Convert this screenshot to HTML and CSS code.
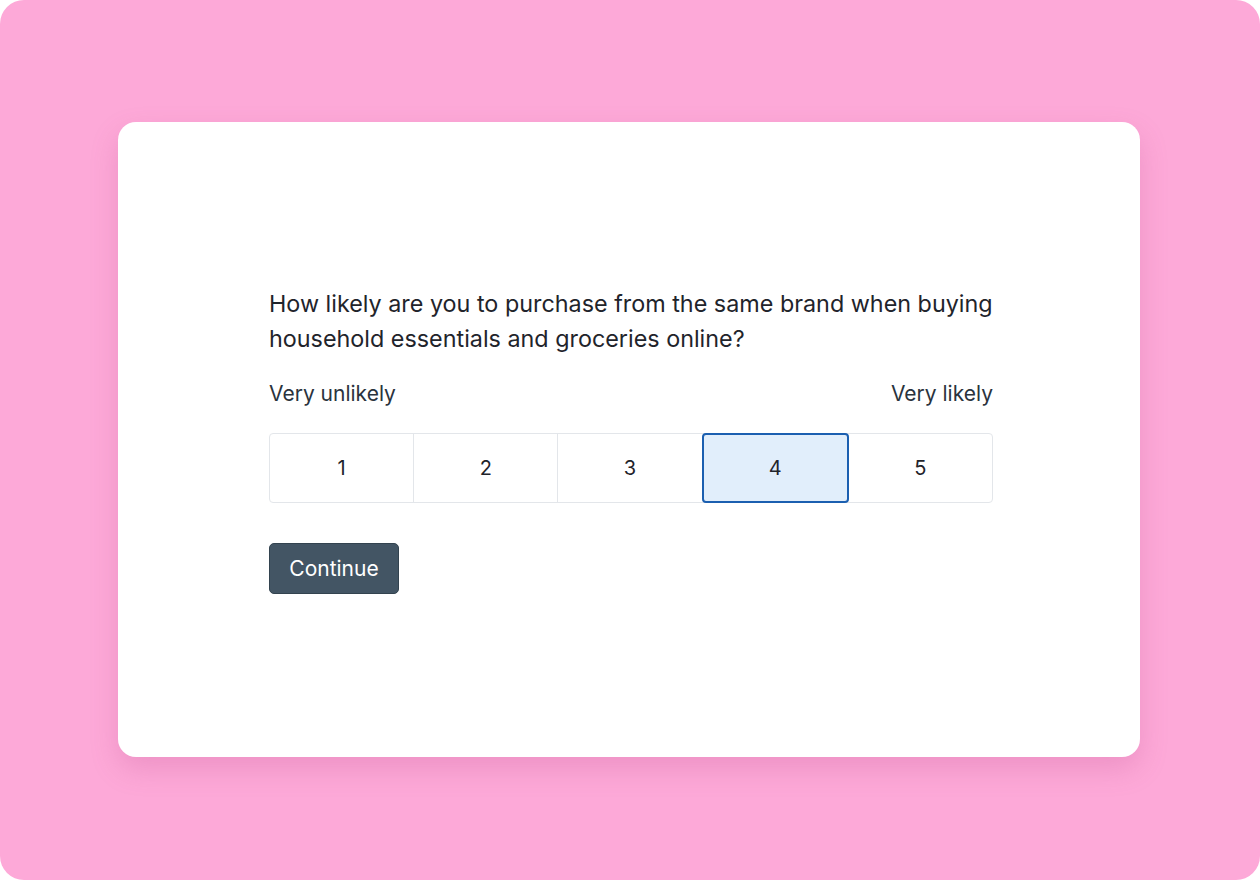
FILE: index.html
```html
<!DOCTYPE html>
<html>
<head>
<meta charset="utf-8">
<link rel="stylesheet" href="styles.css">
</head>
<body>
<div class="stage">
  <div class="card">
    <div class="content">
      <p class="question">How likely are you to purchase from the same brand when buying household essentials and groceries online?</p>
      <div class="labels"><span>Very unlikely</span><span>Very likely</span></div>
      <div class="scale">
        <div class="cell">1</div>
        <div class="cell">2</div>
        <div class="cell">3</div>
        <div class="cell selected">4</div>
        <div class="cell">5</div>
      </div>
      <button class="continue">Continue</button>
    </div>
  </div>
</div>
</body>
</html>
```
FILE: styles.css
```css
html, body { margin: 0; padding: 0; background: #ffffff; }
body { font-family: Inter, "Noto Sans", sans-serif; }
.stage {
  width: 1260px;
  height: 880px;
  background: #fda9d8;
  border-radius: 24px;
  display: flex;
  align-items: flex-start;
  justify-content: flex-start;
  padding-top: 122px;
  padding-left: 118px;
  box-sizing: border-box;
}
.card {
  width: 1022px;
  height: 635px;
  background: #ffffff;
  border-radius: 18px;
  box-shadow: 0 12px 28px rgba(180, 70, 130, 0.22);
  display: flex;
  justify-content: flex-start;
  align-items: flex-start;
  padding-top: 164px;
  padding-left: 151px;
  box-sizing: border-box;
}
.content { width: 724px; }
.question {
  margin: 0;
  font-size: 23.35px;
  line-height: 35px;
  color: #1f242b;
  letter-spacing: 0;
}
.labels {
  display: flex;
  justify-content: space-between;
  margin-top: 24px;
  font-size: 21px;
  line-height: 28px;
  color: #2a333d;
}
.scale {
  display: flex;
  margin-top: 25px;
  height: 70px;
  border: 1px solid #e3e6ea;
  border-radius: 4px;
  box-sizing: border-box;
}
.cell {
  flex: 1;
  display: flex;
  align-items: center;
  justify-content: center;
  font-size: 20px;
  color: #1f242b;
  border-left: 1px solid #e3e6ea;
}
.cell:first-child { border-left: none; }
.cell.selected {
  background: #e1eefb;
  border: 2px solid #1b5fb0;
  border-radius: 4px;
  margin: -1px 0;
}
.cell.selected + .cell { border-left: none; }
.continue {
  margin-top: 40px;
  width: 130px;
  height: 51px;
  background: #435564;
  border: 1px solid #33434f;
  border-radius: 5px;
  color: #ffffff;
  font-family: Inter, "Noto Sans", sans-serif;
  font-size: 21px;
  padding: 0;
  display: block;
}
```
